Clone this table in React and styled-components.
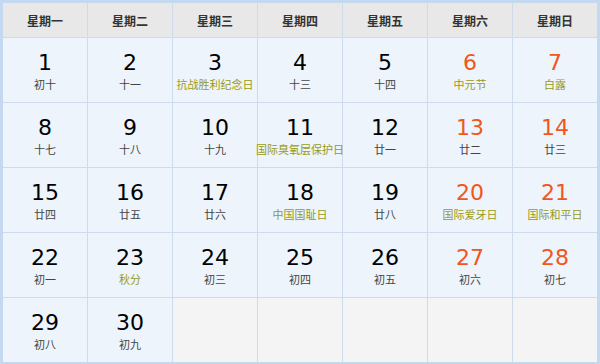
import React from 'react'
import styled, { createGlobalStyle } from 'styled-components'

const GlobalStyle = createGlobalStyle`
  html, body {
    margin: 0;
    padding: 0;
    background: #fff;
  }
`

const WEEK = ['星期一', '星期二', '星期三', '星期四', '星期五', '星期六', '星期日']

const DAYS = [
  { n: 1, t: '初十' },
  { n: 2, t: '十一' },
  { n: 3, t: '抗战胜利纪念日', fest: true },
  { n: 4, t: '十三' },
  { n: 5, t: '十四' },
  { n: 6, t: '中元节', fest: true },
  { n: 7, t: '白露', fest: true },
  { n: 8, t: '十七' },
  { n: 9, t: '十八' },
  { n: 10, t: '十九' },
  { n: 11, t: '国际臭氧层保护日', fest: true },
  { n: 12, t: '廿一' },
  { n: 13, t: '廿二' },
  { n: 14, t: '廿三' },
  { n: 15, t: '廿四' },
  { n: 16, t: '廿五' },
  { n: 17, t: '廿六' },
  { n: 18, t: '中国国耻日', fest: true },
  { n: 19, t: '廿八' },
  { n: 20, t: '国际爱牙日', fest: true },
  { n: 21, t: '国际和平日', fest: true },
  { n: 22, t: '初一' },
  { n: 23, t: '秋分', fest: true },
  { n: 24, t: '初三' },
  { n: 25, t: '初四' },
  { n: 26, t: '初五' },
  { n: 27, t: '初六' },
  { n: 28, t: '初七' },
  { n: 29, t: '初八' },
  { n: 30, t: '初九' },
]

const Table = styled.div`
  width: 594px;
  height: 359px;
  border-style: solid;
  border-color: #c4d8f0;
  border-width: 3px 3px 2px 3px;
  display: grid;
  grid-template-columns: repeat(7, 84px);
  grid-template-rows: 34px repeat(5, 64px);
  gap: 1px;
  background: #cddbec;
  font-family: 'Noto Sans CJK SC', sans-serif;
`

const Head = styled.div`
  background: #e8e8e8;
  display: flex;
  align-items: center;
  justify-content: center;
  font-size: 12px;
  font-weight: bold;
  color: #333;
`

const Cell = styled.div`
  background: ${(p) => (p.$empty ? '#f4f4f4' : '#edf4fb')};
  display: flex;
  flex-direction: column;
  align-items: center;
  padding-top: 12px;
`

const Num = styled.div`
  font-family: 'DejaVu Sans', sans-serif;
  font-size: 22px;
  line-height: 26px;
  color: ${(p) => (p.$weekend ? '#f0561d' : '#000')};
`

const Sub = styled.div`
  font-size: 11px;
  line-height: 16px;
  white-space: nowrap;
  color: ${(p) => (p.$fest ? '#9a9a14' : '#444')};
`

export default function App() {
  const cells = [...DAYS, null, null, null, null, null]
  return (
    <>
      <GlobalStyle />
      <Table>
        {WEEK.map((w) => (
          <Head key={w}>{w}</Head>
        ))}
        {cells.map((d, i) =>
          d ? (
            <Cell key={i}>
              <Num $weekend={i % 7 >= 5}>{d.n}</Num>
              <Sub $fest={d.fest}>{d.t}</Sub>
            </Cell>
          ) : (
            <Cell key={i} $empty />
          )
        )}
      </Table>
    </>
  )
}
